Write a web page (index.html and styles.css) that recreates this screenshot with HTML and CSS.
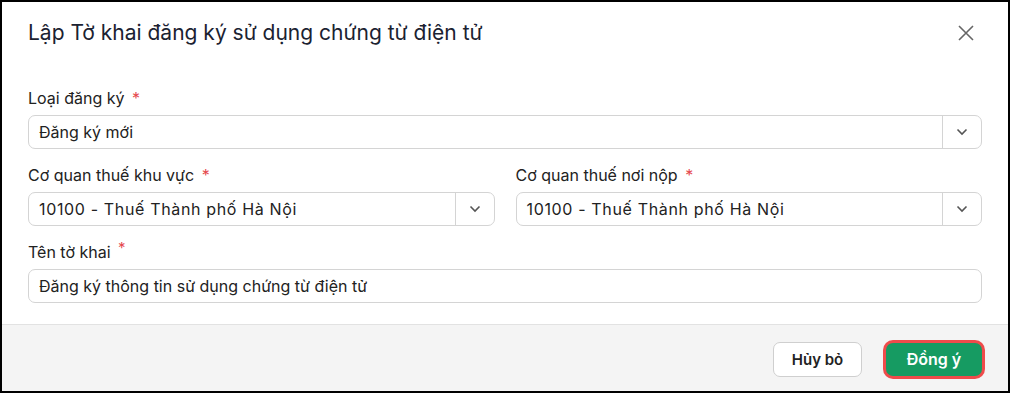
FILE: index.html
```html
<!DOCTYPE html>
<html>
  <head>
    <title>Lập Tờ khai</title>
    <link rel="stylesheet" href="styles.css">
  </head>
  <body>
    <div class="dialog">
      <div class="dialog-header">
        <h1>Lập Tờ khai đăng ký sử dụng chứng từ điện tử</h1>
        <span class="close">
          <svg width="18" height="18" viewBox="0 0 18 18">
            <path d="M2 2 L16 16 M16 2 L2 16" stroke="#666" stroke-width="1.6" fill="none" />
          </svg>
        </span>
      </div>

      <div class="dialog-body">
        <div class="form-group">
          <label>Loại đăng ký <span class="req">*</span></label>
          <div class="select">
            <span class="select-value">Đăng ký mới</span>
            <span class="select-arrow">
              <svg width="12" height="8" viewBox="0 0 12 8"><path d="M1.5 1.5 L6 6 L10.5 1.5" stroke="#555" stroke-width="1.6" fill="none" /></svg>
            </span>
          </div>
        </div>

        <div class="form-row">
          <div class="form-group">
            <label>Cơ quan thuế khu vực <span class="req">*</span></label>
            <div class="select">
              <span class="select-value code">10100 - Thuế Thành phố Hà Nội</span>
              <span class="select-arrow">
                <svg width="12" height="8" viewBox="0 0 12 8"><path d="M1.5 1.5 L6 6 L10.5 1.5" stroke="#555" stroke-width="1.6" fill="none" /></svg>
              </span>
            </div>
          </div>
          <div class="form-group">
            <label>Cơ quan thuế nơi nộp <span class="req">*</span></label>
            <div class="select">
              <span class="select-value code">10100 - Thuế Thành phố Hà Nội</span>
              <span class="select-arrow">
                <svg width="12" height="8" viewBox="0 0 12 8"><path d="M1.5 1.5 L6 6 L10.5 1.5" stroke="#555" stroke-width="1.6" fill="none" /></svg>
              </span>
            </div>
          </div>
        </div>

        <div class="form-group last">
          <label>Tên tờ khai <sup class="req">*</sup></label>
          <input type="text" value="Đăng ký thông tin sử dụng chứng từ điện tử" />
        </div>
      </div>

      <div class="dialog-footer">
        <button class="btn btn-cancel" type="button">Hủy bỏ</button>
        <button class="btn btn-ok" type="button">Đồng ý</button>
      </div>
    </div>
  </body>
</html>
```

FILE: styles.css
```css
html,
body {
  margin: 0;
  padding: 0;
}

body {
  font-family: Inter, "Noto Sans", sans-serif;
  color: #222;
  background: #fff;
}

.dialog {
  width: 1010px;
  height: 393px;
  box-sizing: border-box;
  border: 2px solid #000;
  display: flex;
  flex-direction: column;
}

.dialog-header {
  display: flex;
  align-items: center;
  justify-content: space-between;
  height: 62px;
  padding: 0 33px 0 26px;
}

.dialog-header h1 {
  margin: 0;
  font-size: 21px;
  font-weight: 400;
  color: #1b2231;
}

.close {
  display: flex;
  cursor: pointer;
}

.dialog-body {
  padding: 25px 26px 21px;
  flex: 1;
}

.form-group {
  margin-bottom: 16px;
}

.form-group.last {
  margin-bottom: 0;
}

.form-group label {
  display: block;
  font-size: 16px;
  line-height: 20px;
  margin-bottom: 7px;
  color: #222;
}

.req {
  color: #e5484d;
  margin-left: 3px;
}

sup.req {
  font-size: 15px;
  line-height: 0;
  vertical-align: 5px;
}

.form-row {
  display: grid;
  grid-template-columns: 1fr 1fr;
  gap: 21px;
}

.select {
  display: flex;
  align-items: stretch;
  height: 34px;
  box-sizing: border-box;
  border: 1px solid #d4d4d4;
  border-radius: 7px;
  background: #fff;
}

.select-value {
  flex: 1;
  display: flex;
  align-items: center;
  padding-left: 10px;
  font-size: 16px;
}

.select-value.code {
  letter-spacing: 0.65px;
}

.select-arrow {
  width: 38px;
  border-left: 1px solid #d4d4d4;
  display: flex;
  align-items: center;
  justify-content: center;
}

input[type="text"] {
  width: 100%;
  height: 34px;
  box-sizing: border-box;
  border: 1px solid #d4d4d4;
  border-radius: 7px;
  padding: 0 10px;
  font-family: inherit;
  font-size: 16px;
  color: #222;
}

.dialog-footer {
  height: 65px;
  background: #f4f4f4;
  border-top: 1px solid #e2e2e2;
  display: flex;
  align-items: center;
  justify-content: flex-end;
  gap: 24px;
  padding: 2px 26px 0;
}

.btn {
  font-family: inherit;
  font-size: 15px;
  font-weight: 600;
  border-radius: 7px;
  cursor: pointer;
}

.btn-cancel {
  width: 89px;
  height: 35px;
  background: #fff;
  color: #222;
  border: 1px solid #cfcfcf;
}

.btn-ok {
  width: 96px;
  height: 33px;
  font-size: 16px;
  background: #169b62;
  color: #fff;
  border: none;
  box-shadow: 0 0 0 3px #ef4b4b;
}
```
